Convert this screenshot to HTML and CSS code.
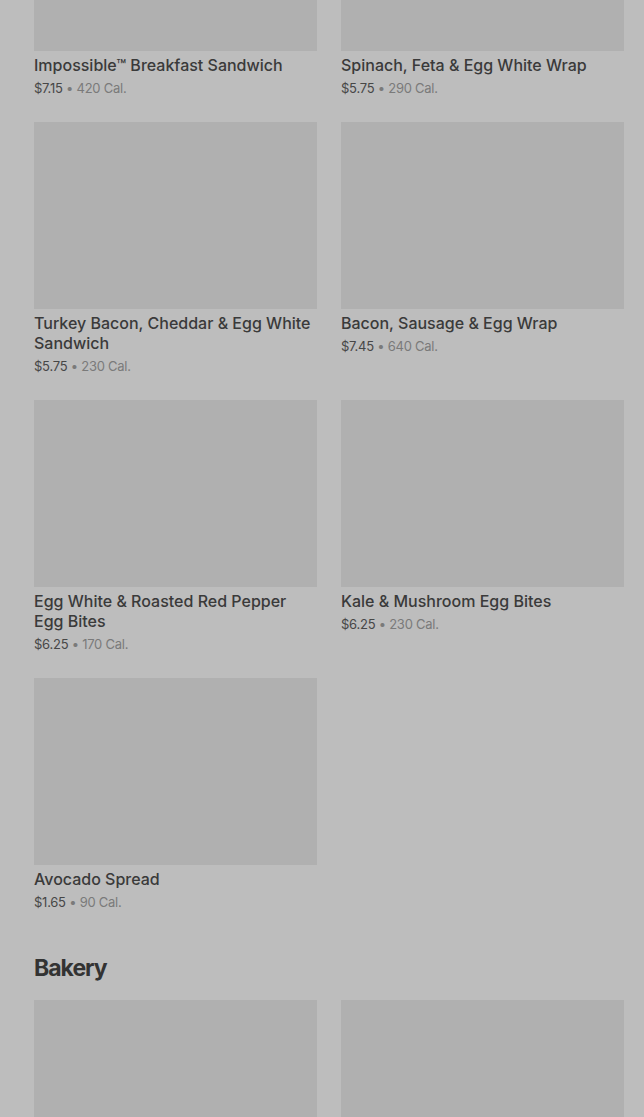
FILE: index.html
```html
<!DOCTYPE html>
<html lang="en">
<head>
  <meta charset="UTF-8">
  <title>Menu</title>
  <link rel="stylesheet" href="styles.css">
</head>
<body>
  <div class="page">
    <!-- breakfast (scrolled) -->
    <section class="menu-section scrolled">
      <div class="grid">
        <div class="card">
          <div class="thumb"></div>
          <div class="name">Impossible™ Breakfast Sandwich</div>
          <div class="meta"><span class="price">$7.15</span> • 420 Cal.</div>
        </div>
        <div class="card">
          <div class="thumb"></div>
          <div class="name">Spinach, Feta &amp; Egg White Wrap</div>
          <div class="meta"><span class="price">$5.75</span> • 290 Cal.</div>
        </div>
        <div class="card">
          <div class="thumb"></div>
          <div class="name">Turkey Bacon, Cheddar &amp; Egg White Sandwich</div>
          <div class="meta"><span class="price">$5.75</span> • 230 Cal.</div>
        </div>
        <div class="card">
          <div class="thumb"></div>
          <div class="name">Bacon, Sausage &amp; Egg Wrap</div>
          <div class="meta"><span class="price">$7.45</span> • 640 Cal.</div>
        </div>
        <div class="card">
          <div class="thumb"></div>
          <div class="name">Egg White &amp; Roasted Red Pepper Egg Bites</div>
          <div class="meta"><span class="price">$6.25</span> • 170 Cal.</div>
        </div>
        <div class="card">
          <div class="thumb"></div>
          <div class="name">Kale &amp; Mushroom Egg Bites</div>
          <div class="meta"><span class="price">$6.25</span> • 230 Cal.</div>
        </div>
        <div class="card">
          <div class="thumb"></div>
          <div class="name">Avocado Spread</div>
          <div class="meta"><span class="price">$1.65</span> • 90 Cal.</div>
        </div>
      </div>
    </section>

    <!-- bakery -->
    <section class="menu-section">
      <h2>Bakery</h2>
      <div class="grid">
        <div class="card">
          <div class="thumb"></div>
        </div>
        <div class="card">
          <div class="thumb"></div>
        </div>
      </div>
    </section>
  </div>
</body>
</html>
```
FILE: styles.css
```css
/* page */
html, body { margin: 0; background: #bdbdbd; overflow: hidden; }
body { font-family: Inter, "Noto Sans", sans-serif; color: #3a3a3a; }
.page { padding: 0 20px 0 34px; }

.menu-section.scrolled { margin-top: -136px; }
.menu-section h2 {
  margin: 40px 0 16px;
  font-size: 23px;
  line-height: 32px;
  font-weight: 700;
  letter-spacing: -1px;
  color: #333;
}

/* grid of items */
.grid {
  display: grid;
  grid-template-columns: 283px 283px;
  column-gap: 24px;
  row-gap: 24px;
}
.thumb {
  height: 187px;
  background: #b0b0b0;
}
.name {
  margin-top: 4px;
  font-size: 16px;
  line-height: 20px;
  font-weight: 500;
  color: #3a3a3a;
}
.meta {
  margin-top: 3px;
  font-size: 13px;
  line-height: 20px;
  letter-spacing: -0.25px;
  color: #7a7a7a;
}
.meta .price { color: #474747; }
```
